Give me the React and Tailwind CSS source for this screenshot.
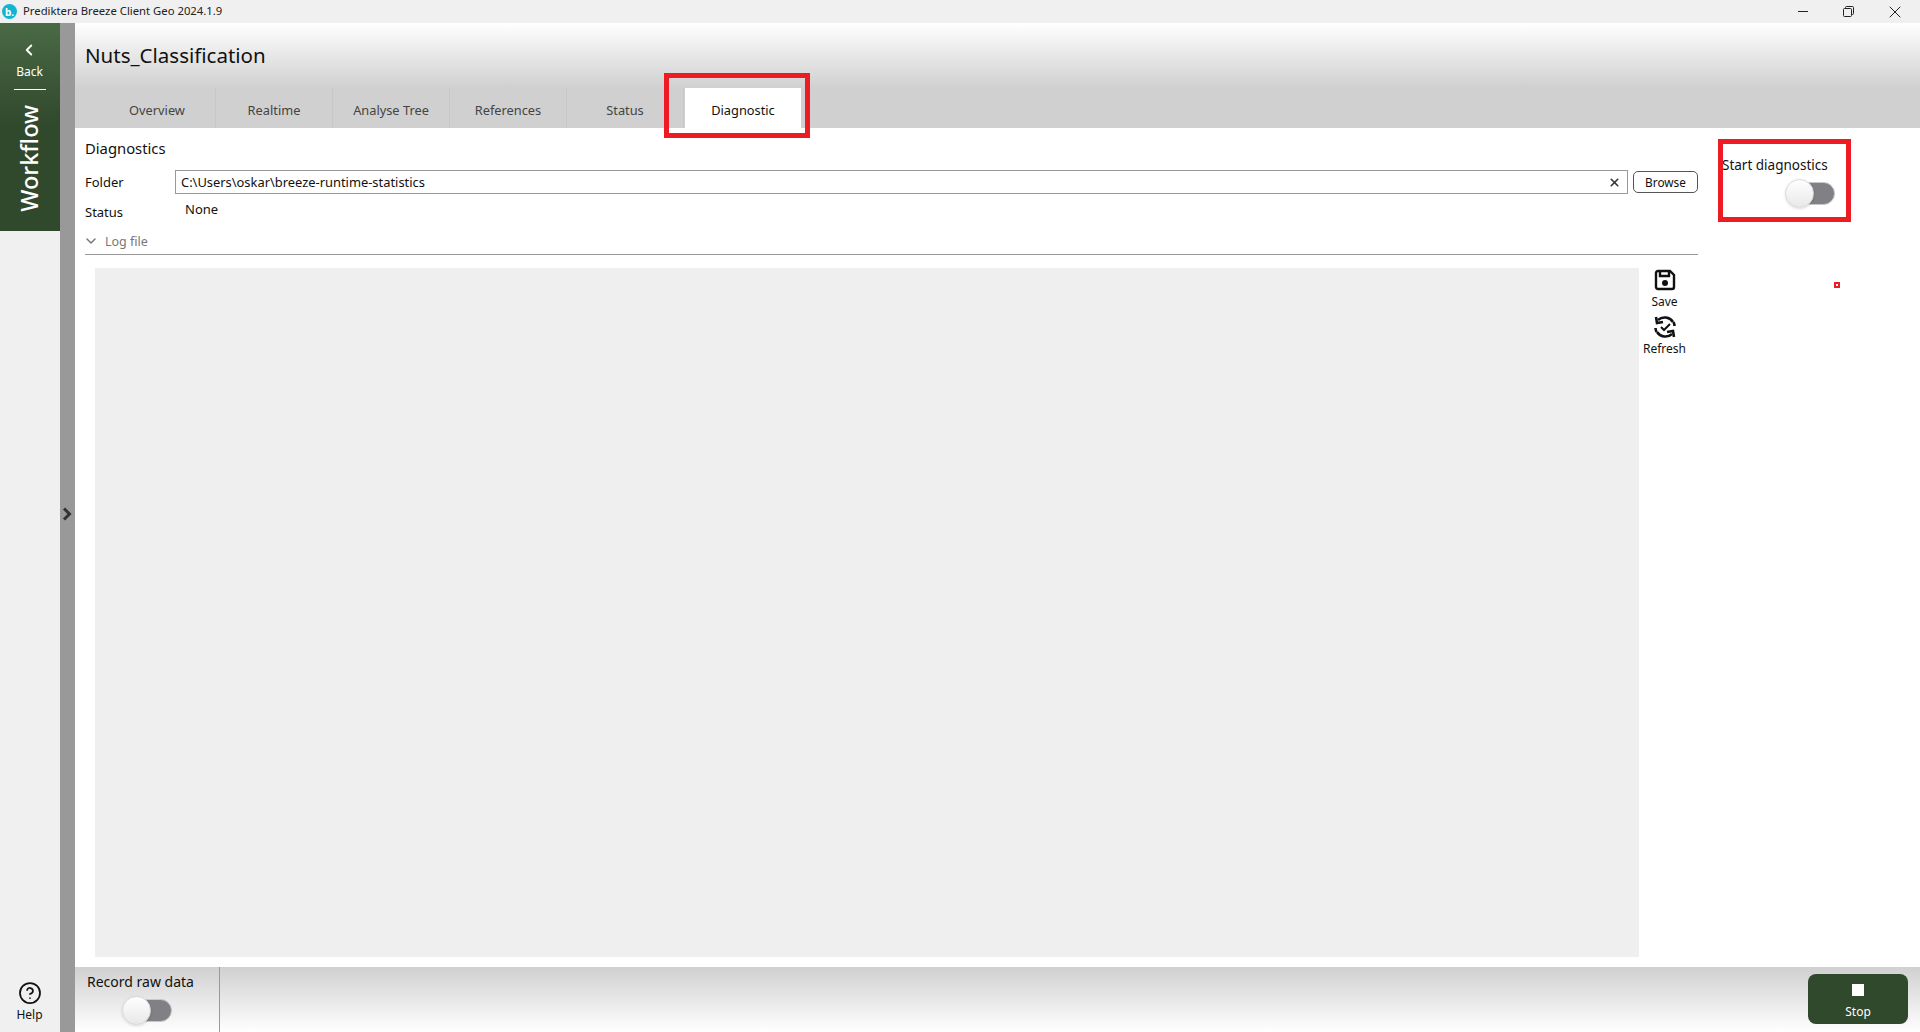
import React from 'react';
import { ChevronLeft, ChevronDown, X, CircleHelp } from 'lucide-react';

const tabs = ['Overview', 'Realtime', 'Analyse Tree', 'References', 'Status'];

const Toggle = () => (
  <div className="relative w-[50px] h-[28px]">
    <div className="absolute left-[8px] right-0 top-[3px] h-[23px] rounded-full bg-[#808085] border border-[#c8c8c8]" />
    <div className="absolute left-0 top-0 w-[29px] h-[29px] rounded-full bg-gradient-to-b from-white to-[#e8e8e8] border border-[#d8d8d8] shadow-sm" />
  </div>
);

const App = () => {
  return (
    <div className="relative w-[1920px] h-[1032px] flex flex-col overflow-hidden bg-white text-[#111] text-[13px] font-['Noto_Sans','Open_Sans',sans-serif]">
      {/* Barra de titulo */}
      <div className="h-[23px] flex items-center bg-[#f0f0f0] shrink-0">
        <div className="ml-[2px] w-[15px] h-[15px] rounded-full bg-[#12b5d0] flex items-center justify-center text-white text-[10px] font-bold leading-none">b.</div>
        <span className="ml-[6px] text-[11.3px] text-[#222]">Prediktera Breeze Client Geo 2024.1.9</span>
        <div className="ml-auto flex items-center text-[#222]">
          <div className="w-[10px] h-px bg-[#222] mr-[35px]" />
          <svg className="mr-[31px]" width="11" height="11" viewBox="0 0 11 11" fill="none" stroke="#222">
            <rect x="0.5" y="2.5" width="8" height="8" rx="1" />
            <path d="M2.5 2.5V1.5a1 1 0 0 1 1-1h6a1 1 0 0 1 1 1v6a1 1 0 0 1-1 1H8.5" />
          </svg>
          <X size={20} strokeWidth={1.2} className="mr-[15px]" />
        </div>
      </div>

      <div className="flex flex-1 min-h-0">
        {/* Lateral */}
        <div className="w-[60px] flex flex-col bg-[#f0f0f0] shrink-0">
          <div className="h-[208px] bg-gradient-to-b from-[#4a6a45] via-[#30482c] to-[#30482c] flex flex-col items-center text-white">
            <ChevronLeft size={18} strokeWidth={2.5} className="mt-[18px] -ml-[2px]" />
            <span className="mt-[4px] -ml-[1px] text-[12px] leading-[18px]">Back</span>
            <div className="mt-[8px] w-[32px] h-px bg-white" />
            <div className="mt-[15px] [writing-mode:vertical-rl] rotate-180 text-[23.5px] leading-none font-medium">Workflow</div>
          </div>
          <div className="mt-auto mb-[8px] flex flex-col items-center -ml-[1px]">
            <CircleHelp size={24} strokeWidth={1.75} />
            <span className="text-[12px] leading-[18px] mt-[1px]">Help</span>
          </div>
        </div>

        {/* Tira gris */}
        <div className="w-[15px] bg-[#999999] flex items-center justify-center shrink-0">
          <svg className="mb-[27px] -ml-[1px]" width="10" height="14" viewBox="0 0 10 14" fill="none" stroke="#333" strokeWidth="3">
            <path d="M2 1.5L7.5 7L2 12.5" />
          </svg>
        </div>

        {/* Principal */}
        <div className="flex-1 flex flex-col min-w-0">
          <div className="h-[65px] shrink-0 flex items-start pl-[10px] pt-[17px] bg-gradient-to-b from-white to-[#d0d0d0]">
            <h1 className="text-[20.5px] leading-[30px] text-[#111]">Nuts_Classification</h1>
          </div>

          <div className="h-[40px] shrink-0 flex bg-[#d0d0d0] pl-[24px]">
            {tabs.map((t) => (
              <div key={t} className="w-[117px] flex items-center justify-center pt-[5px] border-r border-[#c8c8c8] text-[#444] text-[12.8px]">{t}</div>
            ))}
            <div className="w-[116px] ml-px flex items-center justify-center pt-[5px] bg-white text-[#111] text-[12.8px]">Diagnostic</div>
          </div>

          <div className="flex-1 flex min-h-0 pb-[10px]">
            <div className="w-[1623px] shrink-0 flex flex-col pl-[10px]">
              <div className="mt-[9px] text-[14.8px] leading-[22px]">Diagnostics</div>
              <div className="mt-[11px] flex items-center h-[24px]">
                <span className="w-[90px] text-[13px] pt-[2px]">Folder</span>
                <div className="flex-1 h-[24px] flex items-center justify-between border border-[#999] pl-[5px] pr-[6px] text-[12.9px]">
                  <span className="pt-[1px]">C:\Users\oskar\breeze-runtime-statistics</span>
                  <X size={13} strokeWidth={3} className="text-[#333]" />
                </div>
                <div className="ml-[5px] w-[65px] h-[22px] flex items-center justify-center pt-[1px] rounded-[5px] border border-[#555] text-[11.8px]">Browse</div>
              </div>
              <div className="mt-[3px] flex h-[26px] text-[13px]">
                <span className="w-[100px] pt-[6px]">Status</span>
                <span className="pt-[3px]">None</span>
              </div>
              <div className="mt-[6px] flex items-center h-[24px] border-b border-[#999] pb-[1px] text-[#777] text-[12.5px] box-content">
                <ChevronDown size={16} strokeWidth={2.25} className="text-[#777] -ml-[2px]" />
                <span className="ml-[6px] pt-[3px]">Log file</span>
              </div>
              <div className="flex-1 flex pt-[13px] pl-[10px] min-h-0">
                <div className="w-[1544px] bg-[#efefef]" />
                <div className="flex-1 flex flex-col items-center pt-[1px] pr-[8px] text-[12px] leading-[16px]">
                  <svg width="22" height="22" viewBox="0 0 22 22" fill="none" stroke="#111" strokeWidth="2.4">
                    <path d="M4 2h12l4 4v12a2 2 0 0 1-2 2H4a2 2 0 0 1-2-2V4a2 2 0 0 1 2-2z" />
                    <path d="M6 2v5h9V2" />
                    <circle cx="11" cy="14" r="3" fill="#111" stroke="none" />
                  </svg>
                  <span className="mt-[3px]">Save</span>
                  <svg className="mt-[5px]" width="24" height="24" viewBox="0 0 24 24" fill="none" stroke="#111" strokeWidth="2.6">
                    <path d="M5 5a10 10 0 0 1 15 2" />
                    <path d="M3 2l1 6 6-1" />
                    <path d="M19 19a10 10 0 0 1-15-2" />
                    <path d="M21 22l-1-6-6 1" />
                    <path d="M2.5 13a10 10 0 0 0 1 4M21.5 11a10 10 0 0 0-1-4" />
                    <path d="M8 12l3 3 6-6" strokeWidth="2" />
                  </svg>
                  <span className="mt-[2px]">Refresh</span>
                </div>
              </div>
            </div>

            <div className="flex-1 pl-[24px] pt-[27px]">
              <div className="text-[13.5px] leading-[20px]">Start diagnostics</div>
              <div className="mt-[4px] ml-[63px]">
                <Toggle />
              </div>
            </div>
          </div>

          <div className="h-[65px] shrink-0 flex items-stretch bg-gradient-to-b from-[#d0d0d0] to-white">
            <div className="w-[145px] border-r border-[#999] flex flex-col items-start pl-[12px]">
              <span className="mt-[4px] text-[14px] leading-[22px]">Record raw data</span>
              <div className="mt-[3px] ml-[35px]">
                <Toggle />
              </div>
            </div>
            <div className="ml-auto mr-[12px] mt-[7px] w-[100px] h-[50px] rounded-[8px] bg-[#30482c] flex flex-col items-center text-white">
              <div className="mt-[10px] w-[12px] h-[12px] bg-white" />
              <span className="mt-[7px] text-[12px] leading-[18px]">Stop</span>
            </div>
          </div>
        </div>
      </div>

      {/* Marcas rojas de la captura */}
      <div className="absolute left-[664px] top-[73px] w-[146px] h-[65px] border-[5px] border-[#ed1c24]" />
      <div className="absolute left-[1718px] top-[139px] w-[133px] h-[83px] border-[5px] border-[#ed1c24]" />
      <div className="absolute left-[1834px] top-[282px] w-[6px] h-[6px] border-2 border-[#ed1c24] bg-white" />
    </div>
  );
};

export default App;
